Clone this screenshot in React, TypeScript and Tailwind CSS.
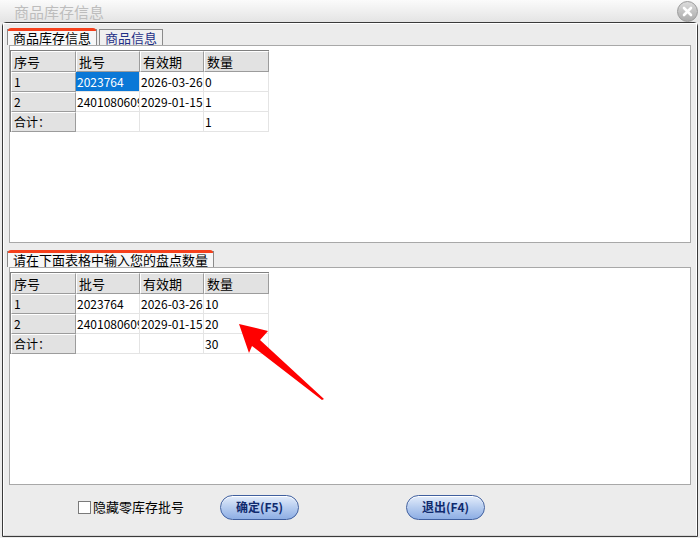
import React from "react";

type Row = string[];

function Grid({ rows, selected }: { rows: Row[]; selected?: [number, number] }) {
  const head = ["序号", "批号", "有效期", "数量"];
  const widths = ["w-[65px]", "w-[64px]", "w-[64px]", "w-[65px]"];
  return (
    <div className="flex flex-col w-[258px]">
      <div className="flex h-[21px]">
        {head.map((h, i) => (
          <div
            key={i}
            className={`${widths[i]} h-full bg-[#e2e2e2] border-t border-l border-t-white border-l-white border-r border-b border-r-[#9c9c9c] border-b-[#9c9c9c] pl-[2px] leading-[19px] text-[13px] text-black overflow-hidden whitespace-nowrap`}
          >
            {h}
          </div>
        ))}
      </div>
      {rows.map((r, ri) => (
        <div key={ri} className="flex h-[20px]">
          {r.map((c, ci) => {
            const sel = selected && selected[0] === ri && selected[1] === ci;
            if (ci === 0) {
              return (
                <div
                  key={ci}
                  className={`${widths[ci]} h-full bg-[#e2e2e2] border-t border-l border-t-white border-l-white border-r border-b border-r-[#9c9c9c] border-b-[#9c9c9c] pl-[2px] leading-[18px] text-[12px] text-black overflow-hidden whitespace-nowrap`}
                >
                  {c}
                </div>
              );
            }
            return (
              <div
                key={ci}
                className={`${widths[ci]} h-full border-r border-b border-[#e4e4e4] ${sel ? "bg-[#0a78d7] text-white" : "bg-white text-black"} pl-[1px] leading-[19px] text-[12px] overflow-hidden whitespace-nowrap`}
              >
                {c}
              </div>
            );
          })}
        </div>
      ))}
    </div>
  );
}

function Tab({ label, active, blue }: { label: string; active?: boolean; blue?: boolean }) {
  return (
    <div
      className={`relative h-[16px] px-[5px] border border-b-0 border-[#8a8a8a] ${active ? "bg-[#f7f7f7]" : "bg-[#f0f0f0]"} text-[13px] leading-[15px] ${blue ? "text-[#1e2f86]" : "text-black"} whitespace-nowrap`}
    >
      {active && (
        <div className="absolute -top-[2px] left-0 right-0 h-[3px] rounded-t-[3px] bg-[#f5401c]" />
      )}
      {label}
    </div>
  );
}

function PillButton({ label }: { label: string }) {
  return (
    <div className="w-[79px] h-[25px] rounded-full border border-[#3f5f9f] bg-gradient-to-b from-[#e4edfb] via-[#b6ccef] to-[#8eaee4] shadow-[inset_0_1px_0_#ffffff] flex items-center justify-center text-[12px] font-bold text-[#0f2a6e]">
      {label}
    </div>
  );
}

export default function App() {
  const rows1: Row[] = [
    ["1", "2023764", "2026-03-26", "0"],
    ["2", "2401080609", "2029-01-15", "1"],
    ["合计：", "", "", "1"],
  ];
  const rows2: Row[] = [
    ["1", "2023764", "2026-03-26", "10"],
    ["2", "2401080609", "2029-01-15", "20"],
    ["合计：", "", "", "30"],
  ];
  return (
    <div
      className="relative w-[700px] h-[538px] bg-[#ececec] flex flex-col overflow-hidden"
      style={{ fontFamily: '"Noto Sans CJK SC", "Liberation Sans", sans-serif' }}
    >
      {/* title bar */}
      <div className="h-[22px] bg-gradient-to-b from-[#fbfbfb] to-[#e4e4e4] flex items-center justify-between pl-[14px] pr-[2px]">
        <span className="text-[15px] text-[#bdbdbd] leading-none">商品库存信息</span>
        <div className="w-[21px] h-[21px] rounded-full bg-gradient-to-b from-[#dcdcdc] to-[#ababab] border border-[#9a9a9a] flex items-center justify-center">
          <svg width="11" height="11" viewBox="0 0 11 11">
            <path d="M2 2 L9 9 M9 2 L2 9" stroke="#ffffff" strokeWidth="2.6" strokeLinecap="round" />
          </svg>
        </div>
      </div>

      {/* client frame */}
      <div className="flex-1 mx-[2px] mb-[1px] border border-[#3a3a3a] rounded-t-[4px] flex">
        <div className="flex-1 border border-white border-b-[#d6d6d6] flex flex-col pl-[3px] pr-[5px]">
          {/* section 1 */}
          <div className="flex gap-[2px] mt-[5px]">
            <Tab label="商品库存信息" active />
            <Tab label="商品信息" blue />
          </div>
          <div className="h-[198px] ml-[2px] border border-[#a8a8a8] bg-white pt-[4px]">
            <div className="border-l border-t border-[#808080] w-fit">
              <Grid rows={rows1} selected={[0, 1]} />
            </div>
          </div>

          {/* section 2 */}
          <div className="flex mt-[8px]">
            <Tab label="请在下面表格中输入您的盘点数量" active />
          </div>
          <div className="h-[218px] ml-[2px] border border-[#a8a8a8] bg-white pt-[4px]">
            <div className="border-l border-t border-[#808080] w-fit">
              <Grid rows={rows2} />
            </div>
          </div>

          {/* bottom bar */}
          <div className="flex items-center h-[44px]">
            <div className="ml-[71px] flex items-center gap-[2px]">
              <div className="w-[13px] h-[13px] border border-[#7a7a7a] bg-white" />
              <span className="text-[13px] text-black">隐藏零库存批号</span>
            </div>
            <div className="ml-[36px]">
              <PillButton label="确定(F5)" />
            </div>
            <div className="ml-[107px]">
              <PillButton label="退出(F4)" />
            </div>
          </div>
        </div>
      </div>

      {/* red arrow annotation */}
      <svg className="absolute left-0 top-0 pointer-events-none" width="700" height="538">
        <polygon
          points="239,324 268,331 260,340 324,399 322,400 252,346 249,353"
          fill="#ff0000"
        />
      </svg>
    </div>
  );
}
